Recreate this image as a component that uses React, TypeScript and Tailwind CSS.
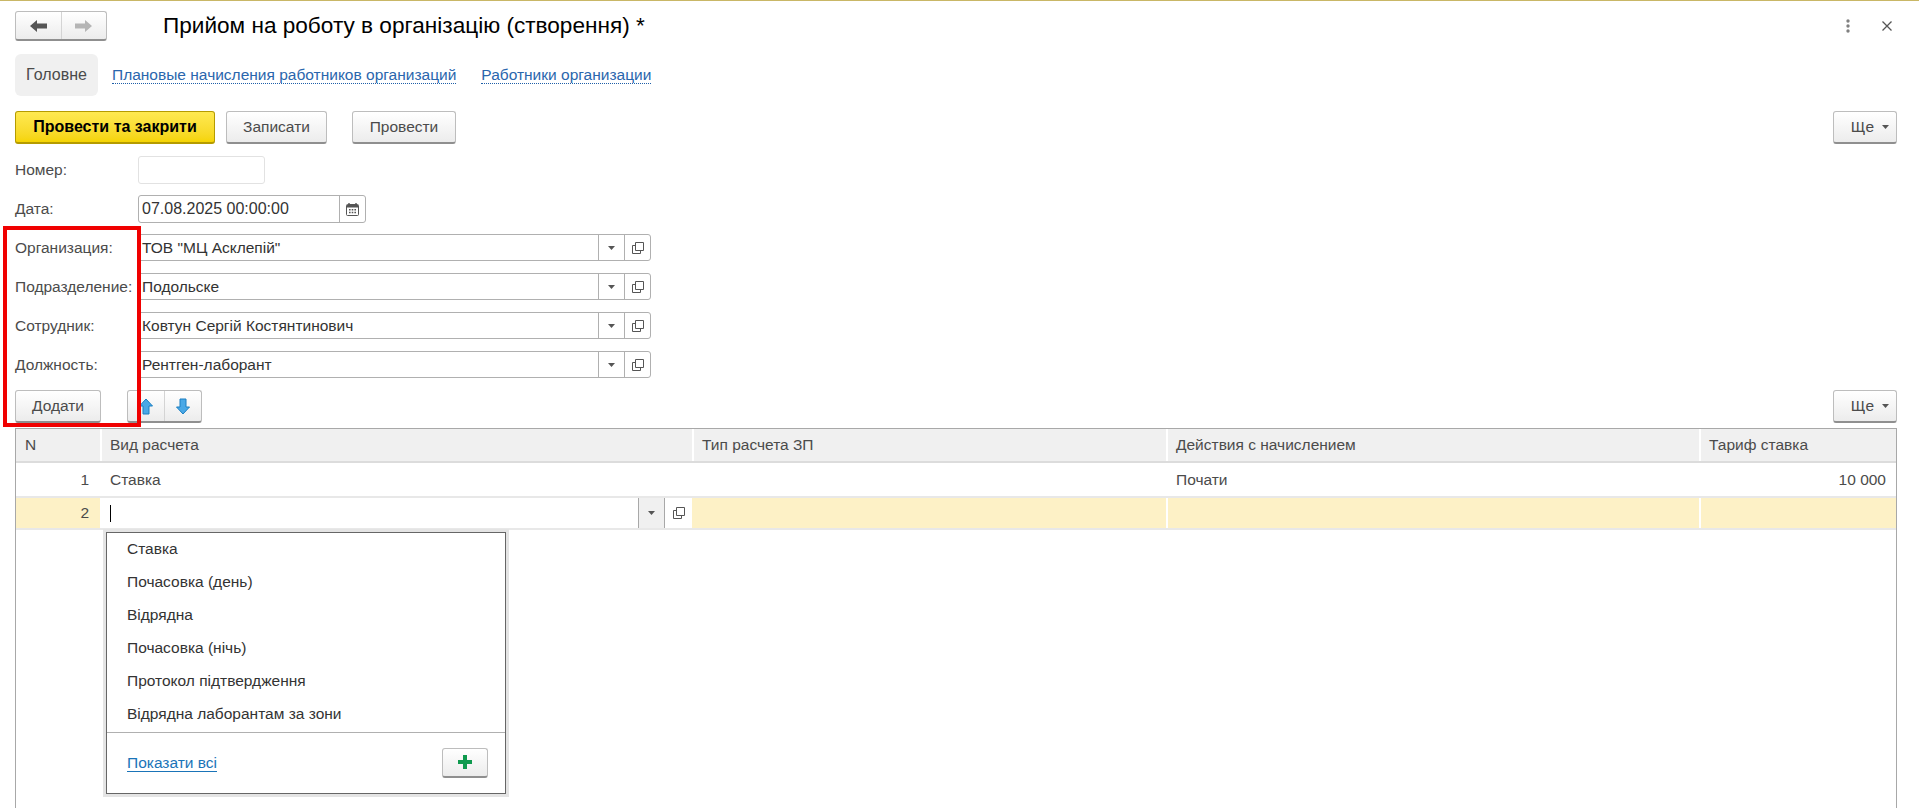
const btn =
  'flex items-center justify-center rounded-[3px] border border-[#bdbdbd] border-b-[#8f8f8f] border-b-2 bg-gradient-to-b from-white to-[#ececec] text-[#4b4b4b] text-[15.5px]'

const fields = [
  { label: 'Организация:', value: 'ТОВ "МЦ Асклепій"' },
  { label: 'Подразделение:', value: 'Подольске' },
  { label: 'Сотрудник:', value: 'Ковтун Сергій Костянтинович' },
  { label: 'Должность:', value: 'Рентген-лаборант' },
]

const options = [
  'Ставка',
  'Почасовка (день)',
  'Відрядна',
  'Почасовка (нічь)',
  'Протокол підтвердження',
  'Відрядна лаборантам за зони',
]

const gridCols = 'grid grid-cols-[84px_592px_474px_533px_197px]'

function Caret() {
  return (
    <svg width="7" height="4" viewBox="0 0 7 4">
      <path d="M0 0h7L3.5 4z" fill="#555" />
    </svg>
  )
}

function CopyIcon() {
  return (
    <svg width="12" height="12" viewBox="0 0 12 12" fill="none" stroke="#555" strokeWidth="1">
      <path d="M3.500 .5h8v8h-8z" />
      <path d="M3.500 3.500h-3v8h8v-3" />
    </svg>
  )
}

function More() {
  return (
    <button className={`${btn} h-[33px] w-[64px] !justify-end gap-[8px] pr-[7px]`}>
      Ще
      <Caret />
    </button>
  )
}

function ArrowBlue({ down }: { down?: boolean }) {
  return (
    <svg width="14" height="17" viewBox="0 0 14 17" className={down ? 'rotate-180' : ''}>
      <path
        d="M7 1 13.500 8H10v8H4V8H.5z"
        fill="#4aa8e6"
        stroke="#1b7fc2"
        strokeWidth="1"
        strokeLinejoin="round"
      />
    </svg>
  )
}

export default function App() {
  return (
    <div className="relative h-[808px] w-[1919px] overflow-hidden bg-white font-['Liberation_Sans',Arial,sans-serif] text-[15.5px] text-[#4b4b4b]">
      <div className="h-px bg-[#c9b766]" />

      {/* header */}
      <div className="mt-[10px] flex h-[30px] items-center pl-[15px] pr-[27px]">
        <div className={`${btn} h-[30px] w-[92px]`}>
          <div className="flex h-full flex-1 items-center justify-center border-r border-[#d4d4d4]">
            <svg width="17" height="12" viewBox="0 0 17 12">
              <path d="M0 6 7 0v3.500h10v5H7V12z" fill="#555" />
            </svg>
          </div>
          <div className="flex h-full flex-1 items-center justify-center">
            <svg width="17" height="12" viewBox="0 0 17 12">
              <path d="M17 6 10 0v3.500H0v5h10V12z" fill="#b5b5b5" />
            </svg>
          </div>
        </div>
        <h1 className="ml-[56px] text-[22.6px] leading-none text-black">
          Прийом на роботу в організацію (створення) *
        </h1>
        <svg width="4" height="14" viewBox="0 0 4 14" className="ml-auto mr-[32px]" fill="#808080">
          <circle cx="2" cy="2" r="1.700" />
          <circle cx="2" cy="7" r="1.700" />
          <circle cx="2" cy="12" r="1.700" />
        </svg>
        <svg width="10" height="10" viewBox="0 0 10 10" stroke="#555" strokeWidth="1.300">
          <path d="M.5.5l9 9M9.500.5l-9 9" />
        </svg>
      </div>

      {/* tabs */}
      <div className="mt-[13px] flex h-[42px] items-center pl-[15px]">
        <div className="flex h-full w-[83px] items-center justify-center rounded-[6px] bg-[#f0f0f0] text-[16px]">Головне</div>
        <a className="ml-[14px] border-b border-dotted border-[#1f5fa8] leading-[17px] text-[#2a66ad]">
          Плановые начисления работников организаций
        </a>
        <a className="ml-[25px] border-b border-dotted border-[#1f5fa8] leading-[17px] text-[#2a66ad]">
          Работники организации
        </a>
      </div>

      {/* command bar */}
      <div className="mt-[15px] flex h-[33px] pl-[15px] pr-[22px]">
        <button className="flex h-[33px] w-[200px] items-center justify-center rounded-[3px] border border-[#b59b00] border-b-2 bg-gradient-to-b from-[#ffe94f] to-[#f5d400] text-[16px] font-bold text-black">
          Провести та закрити
        </button>
        <button className={`${btn} ml-[11px] h-[33px] w-[101px]`}>Записати</button>
        <button className={`${btn} ml-[25px] h-[33px] w-[104px]`}>Провести</button>
        <div className="ml-auto">
          <More />
        </div>
      </div>

      {/* form */}
      <div className="mt-[12px] flex h-[28px] items-center pl-[15px]">
        <span className="w-[123px]">Номер:</span>
        <div className="h-[28px] w-[127px] rounded-[3px] border border-[#e2e2e2]" />
      </div>
      <div className="mt-[11px] flex h-[28px] items-center pl-[15px]">
        <span className="w-[123px]">Дата:</span>
        <div className="flex h-[28px] w-[228px] items-center rounded-[3px] border border-[#b0b0b0]">
          <span className="flex-1 pl-[3px] text-[16px] text-[#333]">07.08.2025 00:00:00</span>
          <div className="flex h-full w-[26px] items-center justify-center border-l border-[#b0b0b0]">
            <svg width="13" height="13" viewBox="0 0 13 13">
              <rect x=".5" y="1.500" width="12" height="11" rx="1" fill="#fff" stroke="#555" />
              <rect x="1" y="2" width="11" height="2.500" fill="#555" />
              <path d="M3 0v3M10 0v3" stroke="#555" strokeWidth="1.400" />
              <path d="M3 6h1.600v1.500H3zM5.700 6h1.600v1.500H5.700zM8.400 6H10v1.500H8.400zM3 8.800h1.600v1.500H3zM5.700 8.800h1.600v1.500H5.700zM8.400 8.800H10v1.500H8.400z" fill="#555" />
            </svg>
          </div>
        </div>
      </div>
      <div className="mt-[11px] flex flex-col gap-[12px]">
        {fields.map((f) => (
          <div key={f.label} className="flex h-[27px] items-center pl-[15px]">
            <span className="w-[123px] whitespace-nowrap">{f.label}</span>
            <div className="flex h-[27px] w-[513px] items-center rounded-[3px] border border-[#b0b0b0]">
              <span className="flex-1 pl-[3px] text-[#333]">{f.value}</span>
              <div className="flex h-full w-[26px] items-center justify-center border-l border-[#b0b0b0]">
                <Caret />
              </div>
              <div className="flex h-full w-[26px] items-center justify-center border-l border-[#b0b0b0]">
                <CopyIcon />
              </div>
            </div>
          </div>
        ))}
      </div>

      {/* table command bar */}
      <div className="mt-[12px] flex h-[33px] pl-[15px] pr-[22px]">
        <button className={`${btn} h-[33px] w-[86px]`}>Додати</button>
        <div className={`${btn} ml-[26px] h-[33px] w-[75px]`}>
          <div className="flex h-full flex-1 items-center justify-center border-r border-[#d4d4d4]">
            <ArrowBlue />
          </div>
          <div className="flex h-full flex-1 items-center justify-center">
            <ArrowBlue down />
          </div>
        </div>
        <div className="ml-auto">
          <More />
        </div>
      </div>

      {/* table */}
      <div className="mx-[15px] mt-[5px] h-[380px] w-[1882px] border-x border-t border-[#a8a8a8] text-[#4b4b4b]">
        <div className={`${gridCols} h-[34px] border-b-2 border-[#dcdcdc] bg-[#f0f0f0]`}>
          <div className="flex items-center pl-[9px]">N</div>
          <div className="flex items-center border-l-2 border-white pl-[8px]">Вид расчета</div>
          <div className="flex items-center border-l-2 border-white pl-[8px]">Тип расчета ЗП</div>
          <div className="flex items-center border-l-2 border-white pl-[8px]">Действия с начислением</div>
          <div className="flex items-center border-l-2 border-white pl-[8px]">Тариф ставка</div>
        </div>
        <div className={`${gridCols} h-[35px] border-b-2 border-[#e8e8e8]`}>
          <div className="flex items-center justify-end pr-[11px]">1</div>
          <div className="flex items-center pl-[10px]">Ставка</div>
          <div />
          <div className="flex items-center pl-[10px]">Почати</div>
          <div className="flex items-center justify-end pr-[10px]">10 000</div>
        </div>
        <div className={`${gridCols} h-[32px] border-b-2 border-[#e8e8e8]`}>
          <div className="flex items-center justify-end bg-[#fdf1c6] pr-[11px]">2</div>
          <div className="flex items-center bg-white pl-[10px]">
            <div className="h-[17px] w-px bg-black" />
            <div className="ml-auto flex h-full w-[27px] items-center justify-center border-x border-[#a8a8a8] bg-[#f0f0f0]">
              <Caret />
            </div>
            <div className="flex h-full w-[27px] items-center justify-center">
              <CopyIcon />
            </div>
          </div>
          <div className="bg-[#fdf1c6]" />
          <div className="border-l-2 border-white bg-[#fdf1c6]" />
          <div className="border-l-2 border-white bg-[#fdf1c6]" />
        </div>
      </div>

      {/* dropdown */}
      <div className="absolute left-[106px] top-[532px] flex h-[262px] w-[400px] flex-col border border-[#666] bg-white shadow-[0_0_0_3px_#e4e4e4]">
        <div className="-mt-px flex flex-col">
          {options.map((o) => (
            <div key={o} className="flex h-[33px] items-center pl-[20px] text-[#333]">
              {o}
            </div>
          ))}
        </div>
        <div className="mt-[2px] flex flex-1 items-center justify-between border-t border-[#b0b0b0] pb-px pl-[20px] pr-[17px]">
          <a className="border-b border-[#1a74b8] leading-[17px] text-[#1a74b8]">Показати всі</a>
          <button className={`${btn} h-[30px] w-[46px]`}>
            <svg width="14" height="14" viewBox="0 0 14 14">
              <path d="M5 0h4v5h5v4H9v5H5V9H0V5h5z" fill="#0f9a4e" />
            </svg>
          </button>
        </div>
      </div>

      {/* red annotation */}
      <div className="absolute left-[3px] top-[226px] h-[201px] w-[138px] border-[4px] border-[#f00000]" />
    </div>
  )
}
